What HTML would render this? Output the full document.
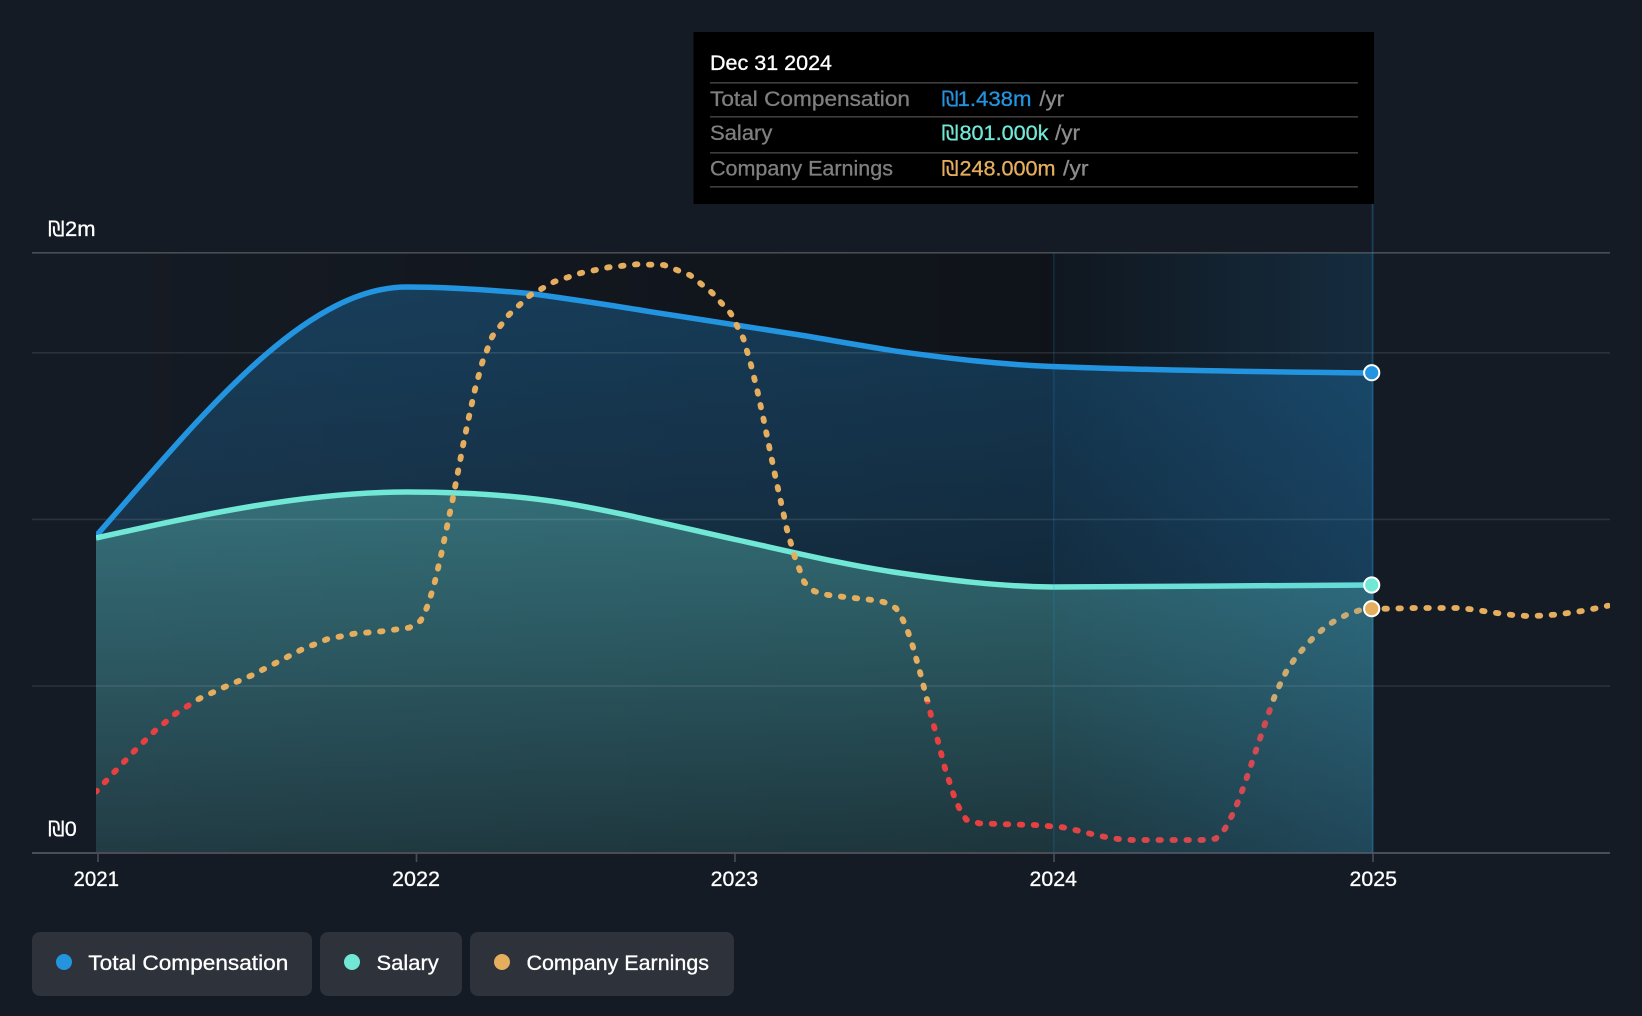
<!DOCTYPE html>
<html><head><meta charset="utf-8"><title>Compensation chart</title>
<style>
html,body{margin:0;padding:0;background:#151b24;width:1642px;height:1016px;overflow:hidden}
svg{display:block}
text{font-family:"Liberation Sans","DejaVu Sans",sans-serif;font-size:21px;fill:#fff;stroke:#fff;stroke-width:.3}
text.s{font-family:"DejaVu Sans","Liberation Sans",sans-serif;stroke-width:.1}
.l{fill:#7f7f7f;stroke:#7f7f7f}
.y{fill:#8c8c8c;stroke:#8c8c8c}
.b{fill:#2394DF;stroke:#2394DF}
.m{fill:#71E7D6;stroke:#71E7D6}
.o{fill:#E5AE5F;stroke:#E5AE5F}
</style></head>
<body>
<svg width="1642" height="1016" viewBox="0 0 1642 1016" xmlns="http://www.w3.org/2000/svg">
<defs>
<linearGradient id="dark" gradientUnits="userSpaceOnUse" x1="96" y1="0" x2="1373" y2="0">
<stop offset="0" stop-color="#000" stop-opacity="0"/><stop offset="0.75" stop-color="#000" stop-opacity="0.3"/><stop offset="1" stop-color="#000" stop-opacity="0.12"/>
</linearGradient>
<linearGradient id="hl" gradientUnits="userSpaceOnUse" x1="1054" y1="0" x2="1373" y2="0">
<stop offset="0" stop-color="#2394DF" stop-opacity="0.03"/><stop offset="1" stop-color="#2394DF" stop-opacity="0.16"/>
</linearGradient>
<linearGradient id="ba" gradientUnits="userSpaceOnUse" x1="0" y1="287" x2="0" y2="853">
<stop offset="0" stop-color="#2394DF" stop-opacity="0.3"/><stop offset="1" stop-color="#2394DF" stop-opacity="0.05"/>
</linearGradient>
<linearGradient id="ma" gradientUnits="userSpaceOnUse" x1="0" y1="492" x2="0" y2="853">
<stop offset="0" stop-color="#71E7D6" stop-opacity="0.33"/><stop offset="1" stop-color="#71E7D6" stop-opacity="0.13"/>
</linearGradient>
<linearGradient id="earn" gradientUnits="userSpaceOnUse" x1="0" y1="701.4" x2="0" y2="702">
<stop offset="0" stop-color="#E5AE5F"/><stop offset="1" stop-color="#E84040"/>
</linearGradient>
<clipPath id="plot"><rect x="96" y="200" width="1514" height="660"/></clipPath>
</defs>

<rect x="96" y="253" width="1277" height="600" fill="url(#dark)"/>

<!-- areas -->
<path d="M96 536C199.7 418 303.3 287 407 287C450 287 490 290 530 293.5C570 299 610 305 650 311.7C700 319.5 750 327 800 335C833 340.5 866 346.5 900 351.7C950 358.5 1000 364.5 1052 366.5C1158 370.5 1265 372 1372 373L1373.5 373L1373.5 853L96 853Z" fill="url(#ba)"/>
<path d="M96 538C199.7 515 303.3 492 407 492C460 492 515 495 567 503.5C620 512.5 677 526.5 733 539C790 551.5 845 565 900 573C950 580.3 1000 586.5 1052 587C1158.7 587 1265.3 585.2 1372 585L1373.5 585L1373.5 853L96 853Z" fill="url(#ma)"/>

<!-- grid -->
<g fill="none">
<path d="M32 252.8H1610" stroke="#fff" stroke-opacity="0.22" stroke-width="1.6"/>
<path d="M32 352.8H1610M32 519.4H1610M32 686H1610" stroke="#fff" stroke-opacity="0.1" stroke-width="1.6"/>
<path d="M32 853H1610" stroke="#4a4d55" stroke-width="2"/>
<path d="M98 853V862M416.5 853V862M735 853V862M1054 853V862M1373 853V862" stroke="#4a4d55" stroke-width="1.6"/>
</g>

<!-- lines -->
<g clip-path="url(#plot)" fill="none">
<path d="M96 536C199.7 418 303.3 287 407 287C450 287 490 290 530 293.5C570 299 610 305 650 311.7C700 319.5 750 327 800 335C833 340.5 866 346.5 900 351.7C950 358.5 1000 364.5 1052 366.5C1158 370.5 1265 372 1372 373" stroke="#2394DF" stroke-width="5.5"/>
<path d="M96 538C199.7 515 303.3 492 407 492C460 492 515 495 567 503.5C620 512.5 677 526.5 733 539C790 551.5 845 565 900 573C950 580.3 1000 586.5 1052 587C1158.7 587 1265.3 585.2 1372 585" stroke="#71E7D6" stroke-width="5.5"/>
<g stroke="url(#earn)" stroke-width="5.8" stroke-linecap="round" stroke-dasharray="2.5 11.5" stroke-dashoffset="1.25">
<path pathLength="728" d="M96 791.7L115.3 771L134.7 750.7L154.7 731L176 713.3L200 698.3L225.3 686.7L251 675.7L275.7 663L300.7 650L326.7 639.3L354 633.7L382 631.3L409.3 627.7L420.7 620.7L426.7 608L431 595L435 581.3L441.3 554L447 526.7L452.7 499.3L458 471.7L463.3 444L469 416.7L475 389.3L482.3 362.3L492.3 336.3L509.3 314.3L530 295.3"/>
<path pathLength="504" d="M530 295.3L554.3 281.7L581 273L608.7 267.3L636.3 264.3L664 265L690.3 275.3L712 292.7L730.7 313.3L743.3 338.3L751 365L757.7 392.3L763.7 420L769.3 447.3L775 475L781 502.3L787 529.7L794.7 556.7L804.3 582.3"/>
<path pathLength="336" d="M804.3 582.3L814.3 591.3L828 595L842 596.7L870 599.7L883.7 602L896 608.2L903 620L908.3 632.7L912.7 646L920.3 673.3L927.3 700.7L930.7 714L938 741.3L945 768.3L953.7 795L959 807.7L966.3 819.7L979 823.3"/>
<path pathLength="308" d="M979 823.3L1007 824.3L1035 825L1063 827.3L1076.7 830.3L1090.3 833.7L1104 836.7L1118 839L1132 840L1160 840L1188 840L1202 840L1215.7 838.7L1225 828.7L1231.7 816L1237.3 803.3L1242.3 790.3L1247 777"/>
<path pathLength="224" d="M1247 777L1256 750.3L1265 723.7L1274.3 697.3L1280 684.3L1286 672L1293.7 660.3L1302.7 649.3L1312 639L1322.3 629.7L1333.3 621.7L1346 615L1359.3 610.3L1371.7 608.7"/>
<path pathLength="238" d="M1371.7 608.7L1387 608.7L1415 608L1443 608L1457 608L1471 609.3L1485 611.3L1499 613.3L1512.7 615L1526.7 616L1540.7 615.7L1554.7 614.7L1568.3 613L1582.3 611L1596 608.3L1608 605.7"/>
</g>
</g>

<!-- highlight -->
<rect x="1054" y="253" width="319" height="600" fill="url(#hl)"/>
<path d="M1053.7 253V853" stroke="#2394DF" stroke-opacity="0.18" stroke-width="1.6" fill="none"/>
<path d="M1372.6 204V853" stroke="#2394DF" stroke-opacity="0.3" stroke-width="1.8" fill="none"/>

<!-- markers -->
<g stroke="#fff" stroke-width="2">
<circle cx="1371.7" cy="372.7" r="7.6" fill="#2394DF"/>
<circle cx="1371.7" cy="585" r="7.6" fill="#71E7D6"/>
<circle cx="1371.7" cy="608.7" r="7.6" fill="#E5AE5F"/>
</g>

<!-- y labels -->
<text class="s" x="48" y="236" textLength="16.5" lengthAdjust="spacingAndGlyphs">₪</text>
<text x="65" y="236" textLength="30.5" lengthAdjust="spacingAndGlyphs">2m</text>
<text class="s" x="48" y="836" textLength="16.5" lengthAdjust="spacingAndGlyphs">₪</text>
<text x="64.8" y="836" textLength="12" lengthAdjust="spacingAndGlyphs">0</text>

<!-- x labels -->
<text x="73.5" y="886" textLength="45.5" lengthAdjust="spacingAndGlyphs">2021</text>
<text x="392" y="886" textLength="48" lengthAdjust="spacingAndGlyphs">2022</text>
<text x="710.7" y="886" textLength="47.5" lengthAdjust="spacingAndGlyphs">2023</text>
<text x="1029.5" y="886" textLength="47.5" lengthAdjust="spacingAndGlyphs">2024</text>
<text x="1349.5" y="886" textLength="47.5" lengthAdjust="spacingAndGlyphs">2025</text>

<!-- tooltip -->
<rect x="693.5" y="32" width="680.5" height="172" fill="#000"/>
<path d="M710 82.8H1358M710 116.8H1358M710 152.8H1358M710 186.8H1358" stroke="#3d3d3d" stroke-width="1.6" fill="none"/>
<text x="710" y="70" textLength="122" lengthAdjust="spacingAndGlyphs">Dec 31 2024</text>
<text class="l" x="710" y="106" textLength="200" lengthAdjust="spacingAndGlyphs">Total Compensation</text>
<text class="l" x="710" y="140" textLength="62.4" lengthAdjust="spacingAndGlyphs">Salary</text>
<text class="l" x="710" y="175.5" textLength="183" lengthAdjust="spacingAndGlyphs">Company Earnings</text>
<text class="s b" x="941.5" y="106" textLength="17" lengthAdjust="spacingAndGlyphs">₪</text>
<text class="b" x="957.5" y="106" textLength="74" lengthAdjust="spacingAndGlyphs">1.438m</text>
<text class="y" x="1039.4" y="106" textLength="24.6" lengthAdjust="spacingAndGlyphs">/yr</text>
<text class="s m" x="941.5" y="140" textLength="17" lengthAdjust="spacingAndGlyphs">₪</text>
<text class="m" x="959.5" y="140" textLength="89" lengthAdjust="spacingAndGlyphs">801.000k</text>
<text class="y" x="1055" y="140" textLength="25" lengthAdjust="spacingAndGlyphs">/yr</text>
<text class="s o" x="941.5" y="175.5" textLength="17" lengthAdjust="spacingAndGlyphs">₪</text>
<text class="o" x="959.5" y="175.5" textLength="96" lengthAdjust="spacingAndGlyphs">248.000m</text>
<text class="y" x="1063" y="175.5" textLength="25.5" lengthAdjust="spacingAndGlyphs">/yr</text>

<!-- legend -->
<rect x="32" y="932" width="280" height="64" rx="8" fill="#2e323a"/>
<rect x="320" y="932" width="142" height="64" rx="8" fill="#2e323a"/>
<rect x="470" y="932" width="264" height="64" rx="8" fill="#2e323a"/>
<circle cx="64" cy="962" r="8" fill="#2394DF"/>
<circle cx="352" cy="962" r="8" fill="#71E7D6"/>
<circle cx="502" cy="962" r="8" fill="#E5AE5F"/>
<text x="88.3" y="970" textLength="200" lengthAdjust="spacingAndGlyphs">Total Compensation</text>
<text x="376.5" y="970" textLength="62.3" lengthAdjust="spacingAndGlyphs">Salary</text>
<text x="526.5" y="970" textLength="182.5" lengthAdjust="spacingAndGlyphs">Company Earnings</text>
</svg>
</body></html>
